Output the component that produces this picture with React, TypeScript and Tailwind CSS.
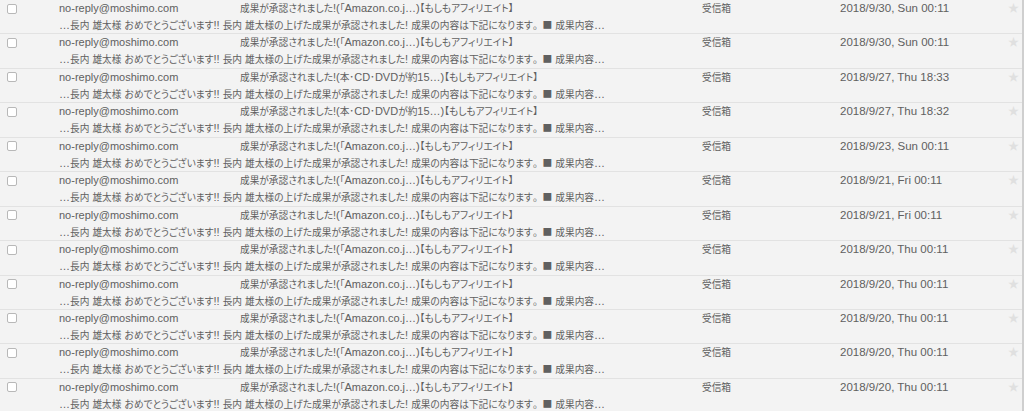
import React from 'react';

const previewText = '…長内 雄太様 おめでとうございます!! 長内 雄太様の上げた成果が承認されました! 成果の内容は下記になります。■ 成果内容…';
const amazon = '成果が承認されました!(「Amazon.co.j…)【もしもアフィリエイト】';
const books = '成果が承認されました!(本･CD･DVDが約15…)【もしもアフィリエイト】';

const mails = [
  { subject: amazon, date: '2018/9/30, Sun 00:11' },
  { subject: amazon, date: '2018/9/30, Sun 00:11' },
  { subject: books, date: '2018/9/27, Thu 18:33' },
  { subject: books, date: '2018/9/27, Thu 18:32' },
  { subject: amazon, date: '2018/9/23, Sun 00:11' },
  { subject: amazon, date: '2018/9/21, Fri 00:11' },
  { subject: amazon, date: '2018/9/21, Fri 00:11' },
  { subject: amazon, date: '2018/9/20, Thu 00:11' },
  { subject: amazon, date: '2018/9/20, Thu 00:11' },
  { subject: amazon, date: '2018/9/20, Thu 00:11' },
  { subject: amazon, date: '2018/9/20, Thu 00:11' },
  { subject: amazon, date: '2018/9/20, Thu 00:11' },
];

// japanese runs get the CJK face at a smaller size with proportional kana
const cjk = /([\u3000-\u30ff\u4e00-\u9fff\uff00-\uffef■]+)/;

function Mixed({ text }: { text: string }) {
  return (
    <>
      {text.split(cjk).map((part, i) => {
        if (!cjk.test(part)) return <span key={i}>{part}</span>;
        // keep the full stop at full width, like the original mail client
        return part.split(/(。)/).map((p, j) =>
          p === '。' ? (
            <span key={`${i}-${j}`} className="font-['Noto_Sans_CJK_JP'] text-[9.7px]">
              {p}
            </span>
          ) : p ? (
            <span key={`${i}-${j}`} className="font-['Noto_Sans_CJK_JP'] text-[9.7px] [font-feature-settings:'palt']">
              {p}
            </span>
          ) : null
        );
      })}
    </>
  );
}

function MailRow({ subject, date }: { subject: string; date: string }) {
  return (
    <div className="grid h-[34.45px] grid-cols-[59px_181px_462px_138px_168px_1fr] grid-rows-[17px_17px] border-b border-[#e2e2e2] text-[11px] leading-[17px] text-[#606060]">
      <div className="flex items-center pl-[7px]">
        <div className="h-[10px] w-[10px] rounded-[2px] border border-[#b8b8b8] bg-white" />
      </div>
      <div className="whitespace-nowrap">no-reply@moshimo.com</div>
      <div className="whitespace-nowrap">
        <Mixed text={subject} />
      </div>
      <div>
        <Mixed text="受信箱" />
      </div>
      <div className="whitespace-nowrap text-[11.5px]">{date}</div>
      <div className="text-[11px] text-[#e0e0e0]">★</div>
      <div className="col-span-3 col-start-2 whitespace-nowrap">
        <Mixed text={previewText} />
      </div>
    </div>
  );
}

export default function App() {
  return (
    <div
      className="h-[411px] w-[1024px] overflow-hidden border-r-2 border-[#cfcfcf] bg-[#f3f3f3]"
      style={{ fontFamily: '"Liberation Sans", "Noto Sans CJK JP", sans-serif' }}
    >
      {mails.map((m, i) => (
        <MailRow key={i} subject={m.subject} date={m.date} />
      ))}
    </div>
  );
}
